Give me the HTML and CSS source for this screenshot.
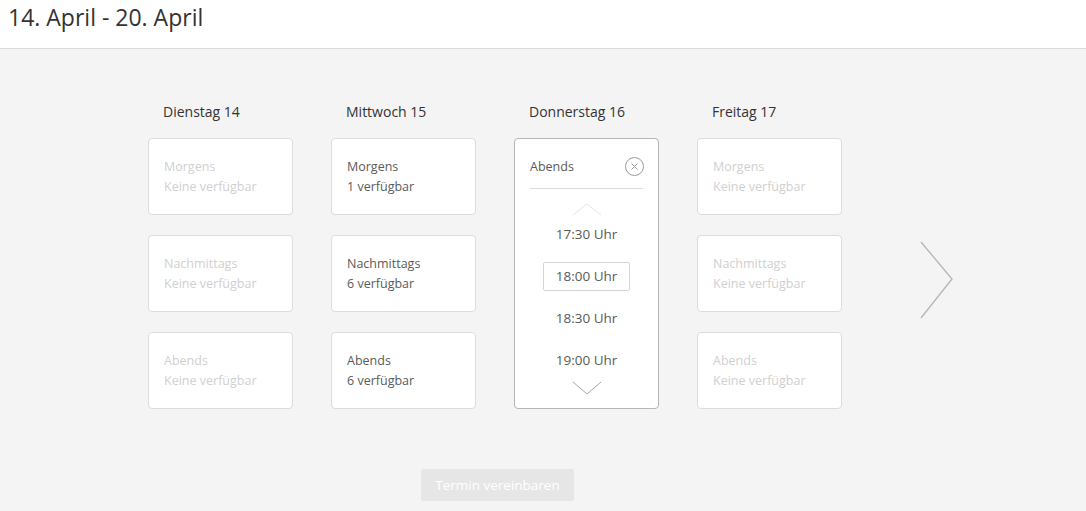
FILE: index.html
```html
<!DOCTYPE html>
<html lang="de">
<head>
    <meta charset="UTF-8">
    <meta name="viewport" content="width=device-width, initial-scale=1.0">
    <title>Termin wählen</title>
    <link rel="stylesheet" href="styles.css">
</head>
<body>
    <header class="top">
        <h1>14. April - 20. April</h1>
    </header>

    <main class="planner">
        <div class="week">
            <div class="day">
                <h2>Dienstag 14</h2>
                <div class="slot empty"><span>Morgens</span><span>Keine verfügbar</span></div>
                <div class="slot empty"><span>Nachmittags</span><span>Keine verfügbar</span></div>
                <div class="slot empty"><span>Abends</span><span>Keine verfügbar</span></div>
            </div>

            <div class="day">
                <h2>Mittwoch 15</h2>
                <div class="slot"><span>Morgens</span><span>1 verfügbar</span></div>
                <div class="slot"><span>Nachmittags</span><span>6 verfügbar</span></div>
                <div class="slot"><span>Abends</span><span>6 verfügbar</span></div>
            </div>

            <div class="day">
                <h2>Donnerstag 16</h2>
                <div class="slot open">
                    <div class="open-head">
                        <span>Abends</span>
                        <svg class="close" width="21" height="21" viewBox="0 0 21 21">
                            <circle cx="10.5" cy="10.5" r="9" fill="none" stroke="#9a9a9a" stroke-width="1"/>
                            <path d="M7.5 7.5 L13.5 13.5 M13.5 7.5 L7.5 13.5" stroke="#9a9a9a" stroke-width="1" fill="none"/>
                        </svg>
                    </div>
                    <svg class="chev up" width="30" height="13" viewBox="0 0 30 13">
                        <path d="M1 12 L15 1 L29 12" fill="none" stroke="#e6e6e6" stroke-width="1"/>
                    </svg>
                    <ul class="times">
                        <li>17:30 Uhr</li>
                        <li><span class="picked">18:00 Uhr</span></li>
                        <li>18:30 Uhr</li>
                        <li>19:00 Uhr</li>
                    </ul>
                    <svg class="chev down" width="30" height="14" viewBox="0 0 30 14">
                        <path d="M1 1 L15 13 L29 1" fill="none" stroke="#a8a8a8" stroke-width="1"/>
                    </svg>
                </div>
            </div>

            <div class="day">
                <h2>Freitag 17</h2>
                <div class="slot empty"><span>Morgens</span><span>Keine verfügbar</span></div>
                <div class="slot empty"><span>Nachmittags</span><span>Keine verfügbar</span></div>
                <div class="slot empty"><span>Abends</span><span>Keine verfügbar</span></div>
            </div>

            <button class="next" aria-label="Nächste Woche">
                <svg width="34" height="80" viewBox="0 0 34 80">
                    <path d="M1 2 L32 39 L1 78" fill="none" stroke="#b8b8b8" stroke-width="1.4"/>
                </svg>
            </button>
        </div>

        <div class="actions">
            <button class="book" disabled>Termin vereinbaren</button>
        </div>
    </main>
</body>
</html>
```

FILE: styles.css
```css
* {
    box-sizing: border-box;
}
body {
    margin: 0;
    font-family: "Open Sans", Arial, sans-serif;
    background-color: #f4f4f4;
    color: #333;
}
.top {
    background-color: #fff;
    height: 49px;
    border-bottom: 1px solid #d9d9d9;
    padding: 1px 8px 0;
}
.top h1 {
    margin: 0;
    font-size: 23px;
    font-weight: 400;
    line-height: 32px;
    color: #333;
}
.planner {
    padding-top: 53px;
    height: 462px;
}
.week {
    display: flex;
    align-items: flex-start;
    padding-left: 148px;
    gap: 38px;
}
.day {
    width: 145px;
    display: flex;
    flex-direction: column;
    gap: 20px;
}
.day h2 {
    margin: 0 0 -4px;
    padding-left: 15px;
    font-size: 14px;
    font-weight: 400;
    line-height: 20px;
    color: #333;
}
.slot {
    height: 77px;
    background-color: #fff;
    border: 1px solid #dcdcdc;
    border-radius: 4px;
    padding: 18px 15px 0;
    display: flex;
    flex-direction: column;
    font-size: 12.5px;
    line-height: 20px;
    color: #5a5a5a;
}
.slot.empty {
    color: #d0d0d0;
}
.slot.open {
    height: 271px;
    padding-top: 17px;
    border-color: #b5b5b5;
    align-items: center;
}
.open-head {
    width: 100%;
    display: flex;
    justify-content: space-between;
    align-items: center;
    padding-bottom: 11px;
    border-bottom: 1px solid #dcdcdc;
}
.open-head span {
    line-height: 20px;
}
.close {
    margin-right: -2px;
}
.chev.up {
    margin-top: 14px;
}
.times {
    list-style: none;
    margin: 0;
    padding: 0;
    width: 100%;
    text-align: center;
    font-size: 13.5px;
    color: #5a5a5a;
}
.times li {
    height: 42px;
    line-height: 42px;
}
.times li:first-child {
    margin-top: -3px;
}
.picked {
    display: inline-block;
    width: 87px;
    height: 29px;
    line-height: 27px;
    border: 1px solid #d5d5d5;
    border-radius: 2px;
}
.chev.down {
    margin-top: 0;
}
.next {
    background: none;
    border: none;
    padding: 0;
    margin: 138px 0 0 40px;
    cursor: pointer;
}
.next svg {
    display: block;
}
.actions {
    padding: 60px 0 0 421px;
}
.book {
    width: 153px;
    height: 32px;
    border: none;
    border-radius: 2px;
    background-color: #e6e6e6;
    color: #fff;
    font-family: "Open Sans", Arial, sans-serif;
    font-size: 13.5px;
}
```
